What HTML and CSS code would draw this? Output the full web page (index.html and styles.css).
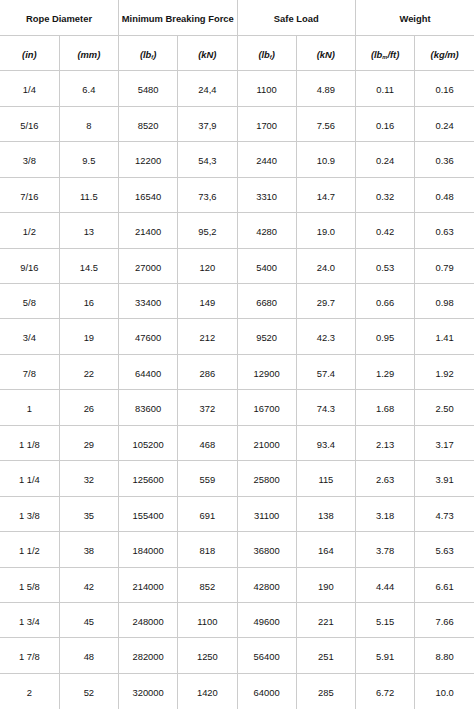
FILE: index.html
```html
<!DOCTYPE html>
<html>
<head>
<meta charset="utf-8">
<link rel="stylesheet" href="styles.css">
</head>
<body>
<table class="rope">
  <colgroup>
    <col><col><col><col><col><col><col><col>
  </colgroup>
  <thead>
    <tr class="group">
      <th colspan="2">Rope Diameter</th>
      <th colspan="2">Minimum Breaking Force</th>
      <th colspan="2">Safe Load</th>
      <th colspan="2">Weight</th>
    </tr>
    <tr class="units">
      <th>(in)</th>
      <th>(mm)</th>
      <th>(lb<sub>f</sub>)</th>
      <th>(kN)</th>
      <th>(lb<sub>f</sub>)</th>
      <th>(kN)</th>
      <th>(lb<sub>m</sub>/ft)</th>
      <th>(kg/m)</th>
    </tr>
  </thead>
  <tbody>
    <tr><td>1/4</td><td>6.4</td><td>5480</td><td>24,4</td><td>1100</td><td>4.89</td><td>0.11</td><td>0.16</td></tr>
    <tr><td>5/16</td><td>8</td><td>8520</td><td>37,9</td><td>1700</td><td>7.56</td><td>0.16</td><td>0.24</td></tr>
    <tr><td>3/8</td><td>9.5</td><td>12200</td><td>54,3</td><td>2440</td><td>10.9</td><td>0.24</td><td>0.36</td></tr>
    <tr><td>7/16</td><td>11.5</td><td>16540</td><td>73,6</td><td>3310</td><td>14.7</td><td>0.32</td><td>0.48</td></tr>
    <tr><td>1/2</td><td>13</td><td>21400</td><td>95,2</td><td>4280</td><td>19.0</td><td>0.42</td><td>0.63</td></tr>
    <tr><td>9/16</td><td>14.5</td><td>27000</td><td>120</td><td>5400</td><td>24.0</td><td>0.53</td><td>0.79</td></tr>
    <tr><td>5/8</td><td>16</td><td>33400</td><td>149</td><td>6680</td><td>29.7</td><td>0.66</td><td>0.98</td></tr>
    <tr><td>3/4</td><td>19</td><td>47600</td><td>212</td><td>9520</td><td>42.3</td><td>0.95</td><td>1.41</td></tr>
    <tr><td>7/8</td><td>22</td><td>64400</td><td>286</td><td>12900</td><td>57.4</td><td>1.29</td><td>1.92</td></tr>
    <tr><td>1</td><td>26</td><td>83600</td><td>372</td><td>16700</td><td>74.3</td><td>1.68</td><td>2.50</td></tr>
    <tr><td>1 1/8</td><td>29</td><td>105200</td><td>468</td><td>21000</td><td>93.4</td><td>2.13</td><td>3.17</td></tr>
    <tr><td>1 1/4</td><td>32</td><td>125600</td><td>559</td><td>25800</td><td>115</td><td>2.63</td><td>3.91</td></tr>
    <tr><td>1 3/8</td><td>35</td><td>155400</td><td>691</td><td>31100</td><td>138</td><td>3.18</td><td>4.73</td></tr>
    <tr><td>1 1/2</td><td>38</td><td>184000</td><td>818</td><td>36800</td><td>164</td><td>3.78</td><td>5.63</td></tr>
    <tr><td>1 5/8</td><td>42</td><td>214000</td><td>852</td><td>42800</td><td>190</td><td>4.44</td><td>6.61</td></tr>
    <tr><td>1 3/4</td><td>45</td><td>248000</td><td>1100</td><td>49600</td><td>221</td><td>5.15</td><td>7.66</td></tr>
    <tr><td>1 7/8</td><td>48</td><td>282000</td><td>1250</td><td>56400</td><td>251</td><td>5.91</td><td>8.80</td></tr>
    <tr><td>2</td><td>52</td><td>320000</td><td>1420</td><td>64000</td><td>285</td><td>6.72</td><td>10.0</td></tr>
  </tbody>
</table>
</body>
</html>
```

FILE: styles.css
```css
html, body {
  margin: 0;
  padding: 0;
  background: #ffffff;
}

.rope {
  width: 474px;
  table-layout: fixed;
  border-collapse: collapse;
  font-family: "Liberation Sans", Arial, sans-serif;
  font-size: 9.4px;
  color: #141414;
}

.rope col {
  width: 12.5%;
}

.rope tr {
  height: 35.45px;
}

.rope th,
.rope td {
  padding: 3px 0 0 0;
  text-align: center;
  vertical-align: middle;
  border-right: 1px solid #cccccc;
  border-bottom: 1px solid #cccccc;
  white-space: nowrap;
  line-height: 1;
}

.rope th:last-child,
.rope td:last-child {
  border-right: none;
}

.rope tbody tr:last-child td {
  border-bottom: none;
}

.rope th {
  font-weight: bold;
}

.rope .units th {
  font-style: italic;
}

.rope sub {
  font-size: 0.6em;
  vertical-align: -0.25em;
  line-height: 0;
}
```
